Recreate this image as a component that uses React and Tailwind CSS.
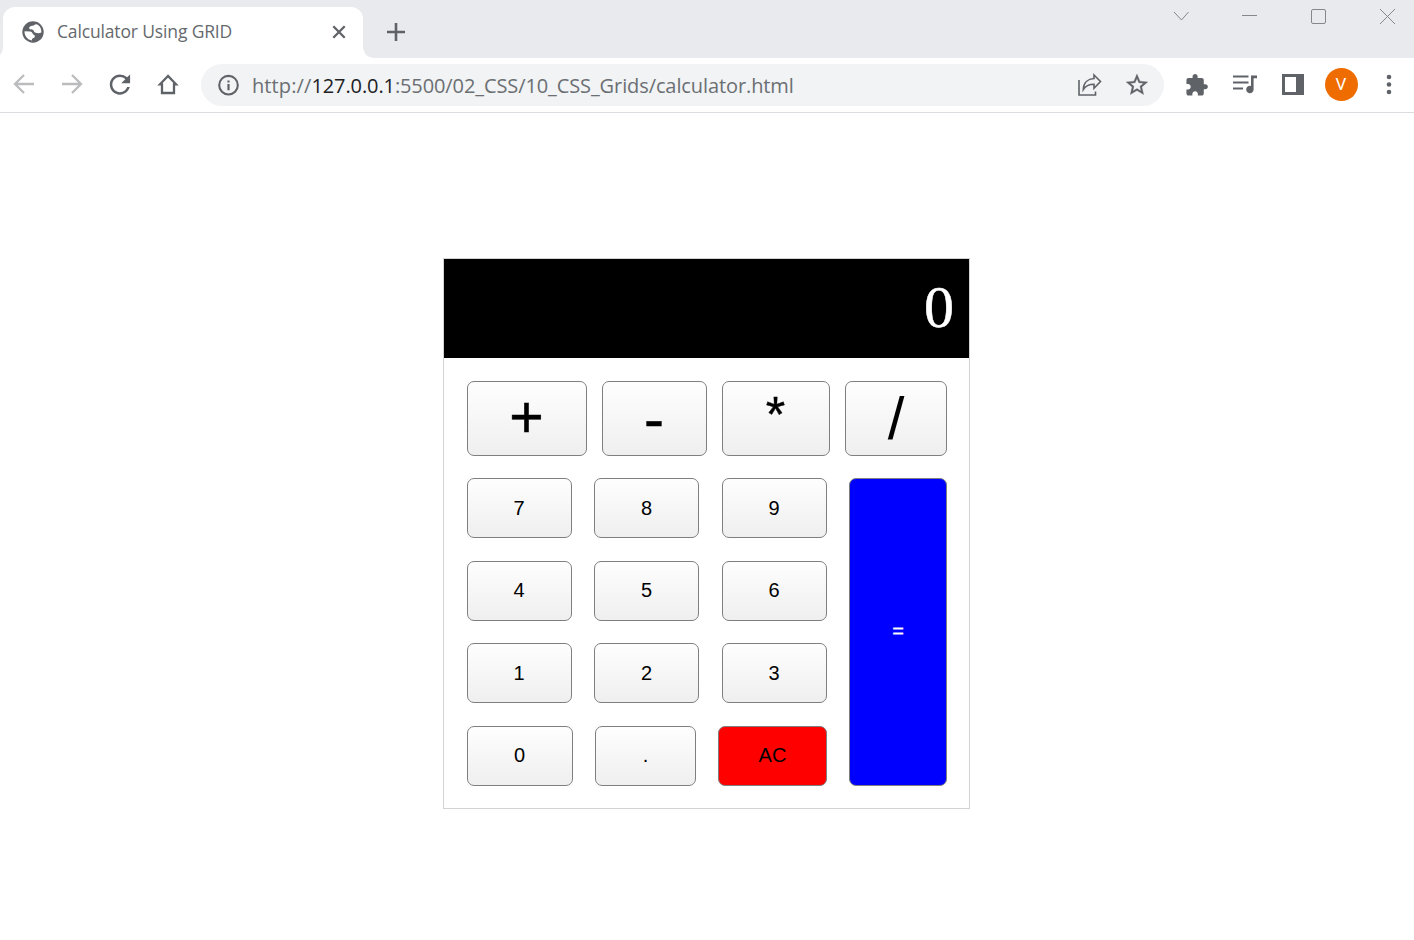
import React from "react";

const uiFont = "font-['Segoe_UI','Open_Sans','Noto_Sans',sans-serif]";

function Cell({ children }) {
  return (
    <svg className="block h-[54px] w-12 shrink-0" viewBox="0 0 48 54" fill="#5f6368">
      {children}
    </svg>
  );
}

function TabStrip() {
  return (
    <div className="flex h-[58px] items-start justify-between bg-[#e8eaed]">
      <div className="flex items-end pt-[7px]">
        <svg className="h-[51px] w-[3px]" viewBox="0 0 3 51">
          <path d="M3 39C3 43 2 46 0 48V51H3Z" fill="#fff" />
        </svg>
        <div className="flex h-[51px] w-[360px] items-center rounded-t-xl bg-white pb-px pl-[18px] pr-[14px]">
          <svg className="h-6 w-6 shrink-0" viewBox="0 0 24 24">
            <circle cx="12" cy="12" r="10.7" fill="#5f6368" />
            <path
              d="M15.500 4.300C13.800 4 13.300 5.600 11.500 5.800C9.500 6 7.800 7 8.200 8.500C8.600 9.700 11 9.200 12.200 10C13.300 10.700 12.600 12.100 14 12.600C16 13.200 18 13.800 20.300 12.500C20.600 8.500 18.800 5.600 15.500 4.300ZM3.500 11.300C3.300 16 6.500 19.800 11 20.500C10.700 19 11.200 18.300 12.700 17.900C14.300 17.400 14.300 15.400 12.800 14.800C11.300 14.200 11.600 12 9.200 11.600Z"
              fill="#fff"
            />
          </svg>
          <div className={`ml-[12px] flex-1 whitespace-nowrap pb-[2px] text-[17.5px] tracking-[-0.15px] text-[#65696d] ${uiFont}`}>
            Calculator Using GRID
          </div>
          <svg className="h-5 w-5" viewBox="0 0 20 20" stroke="#5f6368" strokeWidth="2.3">
            <path d="M4.300 4.300L15.700 15.700M15.700 4.300L4.300 15.700" />
          </svg>
        </div>
        <svg className="h-[51px] w-[12px]" viewBox="0 0 12 51">
          <path d="M0 39C0 46 4 51 12 51H0Z" fill="#fff" />
        </svg>
        <svg className="mb-[14px] ml-[9px] h-6 w-6" viewBox="0 0 24 24" stroke="#5f6368" strokeWidth="2.6">
          <path d="M3 12H21M12 3V21" />
        </svg>
      </div>
      <div className="flex">
        <svg className="h-8 w-[69px]" viewBox="0 0 69 32" fill="none" stroke="#85878a">
          <path d="M28 12L35.500 20L42.500 12" />
        </svg>
        <svg className="h-8 w-[69px]" viewBox="0 0 69 32" fill="none" stroke="#85878a">
          <path d="M27 15.5H42" />
        </svg>
        <svg className="h-8 w-[69px]" viewBox="0 0 69 32" fill="none" stroke="#85878a">
          <rect x="27.5" y="9.5" width="14" height="14" rx="1.500" />
        </svg>
        <svg className="h-8 w-[61px]" viewBox="0 0 61 32" fill="none" stroke="#85878a">
          <path d="M27 9L42 24M42 9L27 24" />
        </svg>
      </div>
    </div>
  );
}

function Toolbar() {
  return (
    <div className="flex h-[55px] border-b border-[#dadce0] bg-white">
      <Cell>
        <path d="M34 26H15.500M24 17L15 26L24 35" fill="none" stroke="#babcbe" strokeWidth="2.300" />
      </Cell>
      <Cell>
        <path d="M14 26H32.500M24 17L33 26L24 35" fill="none" stroke="#babcbe" strokeWidth="2.300" />
      </Cell>
      <Cell>
        <path
          transform="translate(8.7 11.3) scale(1.27)"
          d="M17.65 6.35A7.958 7.958 0 0 0 12 4c-4.42 0-7.99 3.58-7.99 8s3.57 8 7.99 8c3.73 0 6.84-2.55 7.73-6h-2.08A5.99 5.99 0 0 1 12 18c-3.31 0-6-2.69-6-6s2.69-6 6-6c1.66 0 3.14.69 4.22 1.78L13 11h7V4l-2.35 2.35z"
        />
      </Cell>
      <Cell>
        <path d="M24 18L16 26.300H18V35H30V26.300H32Z" fill="none" stroke="#5f6368" strokeWidth="2.300" />
      </Cell>
      <div className="ml-[9px] mr-[9px] mt-[6px] flex h-[42px] flex-1 items-center rounded-full bg-[#f1f3f4]">
        <svg className="ml-[16px] h-6 w-6 shrink-0" viewBox="0 0 24 24" fill="#5f6368">
          <circle cx="11.5" cy="12.2" r="9.300" fill="none" stroke="#5f6368" strokeWidth="2.100" />
          <path d="M10.400 7.400h2.200v2.200h-2.200zM10.400 11h2.200v6.200h-2.200z" />
        </svg>
        <div className={`ml-[11px] flex-1 whitespace-nowrap pt-[2px] text-[20px] tracking-[-0.1px] text-[#6b6f73] ${uiFont}`}>
          <span className="tracking-[0.1px]">http://</span>
          <span className="text-[#202124]">127.0.0.1</span>:5500/02_CSS/10_CSS_Grids/calculator.html
        </div>
        <svg className="h-[42px] w-12 shrink-0" viewBox="0 6 48 42" fill="none" stroke="#5f6368" strokeWidth="1.6">
          <path d="M14 22V37H30.500V33.500" />
          <path d="M29 17L35.500 23.500L29 30.300V26.200C23.500 26.200 20.500 27.800 18.300 31.500C18.500 24.500 23 20.800 29 20.500Z" />
        </svg>
        <svg className="mr-[3px] h-[42px] w-12 shrink-0" viewBox="0 6 48 42" fill="#5f6368">
          <path
            transform="translate(11 13.9) scale(1.08)"
            stroke="#5f6368"
            strokeWidth="0.3"
            d="M22 9.24l-7.19-.62L12 2 9.19 8.63 2 9.24l5.46 4.73L5.82 21 12 17.27 18.18 21l-1.63-7.03L22 9.24zM12 15.4l-3.76 2.27 1-4.28-3.32-2.88 4.38-.38L12 6.1l1.71 4.04 4.38.38-3.32 2.88 1 4.28L12 15.4z"
          />
        </svg>
      </div>
      <Cell>
        <path
          transform="translate(11.4 15) scale(1.02)"
          d="M20.5 11H19V7c0-1.1-.9-2-2-2h-4V3.5C13 2.12 11.88 1 10.5 1S8 2.12 8 3.5V5H4c-1.1 0-1.99.9-1.99 2v3.8H3.500c1.49 0 2.700 1.210 2.700 2.700s-1.210 2.700-2.700 2.700H2V20c0 1.100.900 2 2 2h3.800v-1.500c0-1.490 1.210-2.700 2.700-2.700s2.700 1.210 2.700 2.700V22H17c1.100 0 2-.900 2-2v-4h1.500c1.380 0 2.500-1.120 2.500-2.500S21.880 11 20.500 11z"
        />
      </Cell>
      <Cell>
        <path d="M12 18.500H27.500M12 24.500H27.500M12 30.500H22" fill="none" stroke="#5f6368" strokeWidth="2.200" />
        <path d="M30 17.500H36V20.200H32.600V31.500A3.700 3.700 0 1 1 30 28Z" />
      </Cell>
      <Cell>
        <path fillRule="evenodd" d="M13 16H35V37H13ZM16 19V34H27V19Z" />
      </Cell>
      <div className="flex h-[53px] w-12 items-center justify-center">
        <div className="flex h-[33px] w-[33px] items-center justify-center rounded-full bg-[#ef6c00] pt-px font-['Roboto',sans-serif] text-[17px] text-white">
          V
        </div>
      </div>
      <Cell>
        <circle cx="24" cy="19" r="2.300" />
        <circle cx="24" cy="26.500" r="2.300" />
        <circle cx="24" cy="34" r="2.300" />
      </Cell>
      <div className="w-px" />
    </div>
  );
}

const keyBase =
  "box-border flex shrink-0 items-center justify-center rounded-[7px] border border-[#7f7f7f] leading-none font-['Liberation_Sans',Arial,sans-serif]";
const plain = "bg-linear-to-b from-[#fefefe] to-[#efefef] text-black";

function Key({ className = "w-[105px] pr-px", tone = plain, children }) {
  return <button className={`${keyBase} h-[60px] text-[20px] ${tone} ${className}`}>{children}</button>;
}

function Operator({ className, children }) {
  return <button className={`${keyBase} h-[75px] ${plain} ${className}`}>{children}</button>;
}

function Calculator() {
  return (
    <div className="h-[551px] w-[527px] border border-[#d3d3d3]">
      <div className="flex h-[99px] items-center justify-end bg-black pb-[4px] pr-[15px] text-[60px] leading-none text-white font-['Liberation_Serif','Times_New_Roman',serif] [-webkit-text-stroke:0.5px_white]">
        0
      </div>
      <div className="px-[23px] pt-[23px]">
        <div className="flex gap-[15px]">
          <Operator className="w-[120px] pb-[2px] pr-px text-[59px] [-webkit-text-stroke:0.5px_black]">+</Operator>
          <Operator className="w-[105px] pr-px text-[60px] [-webkit-text-stroke:0.5px_black]">-</Operator>
          <Operator className="w-[108px] pb-[8px] pr-px text-[50px] [-webkit-text-stroke:0.4px_black]">*</Operator>
          <Operator className="w-[102px] text-[60px]">/</Operator>
        </div>
        <div className="mt-[22px] flex gap-[22px]">
          <div className="flex h-[308px] w-[360px] flex-col">
            <div className="flex">
              <Key>7</Key>
              <Key className="ml-[22px] w-[105px]">8</Key>
              <Key className="ml-[23px] w-[105px] pr-px">9</Key>
            </div>
            <div className="mt-[23px] flex">
              <Key className="w-[105px] pb-[2px] pr-px">4</Key>
              <Key className="ml-[22px] w-[105px] pb-[2px]">5</Key>
              <Key className="ml-[23px] w-[105px] pb-[2px] pr-px">6</Key>
            </div>
            <div className="mt-[22px] flex">
              <Key>1</Key>
              <Key className="ml-[22px] w-[105px]">2</Key>
              <Key className="ml-[23px] w-[105px] pr-px">3</Key>
            </div>
            <div className="mt-[23px] flex gap-[22px]">
              <Key className="w-[106px] pb-[2px] pr-px">0</Key>
              <Key className="w-[101px] pb-[2px]">.</Key>
              <Key className="w-[109px] pb-[2px]" tone="bg-[#ff0000] text-black">AC</Key>
            </div>
          </div>
          <button className={`${keyBase} h-[308px] w-[98px] bg-[#0000ff] pb-[2px] text-[20px] text-white [-webkit-text-stroke:0.3px_white]`}>=</button>
        </div>
      </div>
    </div>
  );
}

export default function App() {
  return (
    <div className="flex h-[940px] w-[1414px] flex-col overflow-hidden bg-white">
      <TabStrip />
      <Toolbar />
      <main className="flex justify-center pr-[1px] pt-[145px]">
        <Calculator />
      </main>
    </div>
  );
}
